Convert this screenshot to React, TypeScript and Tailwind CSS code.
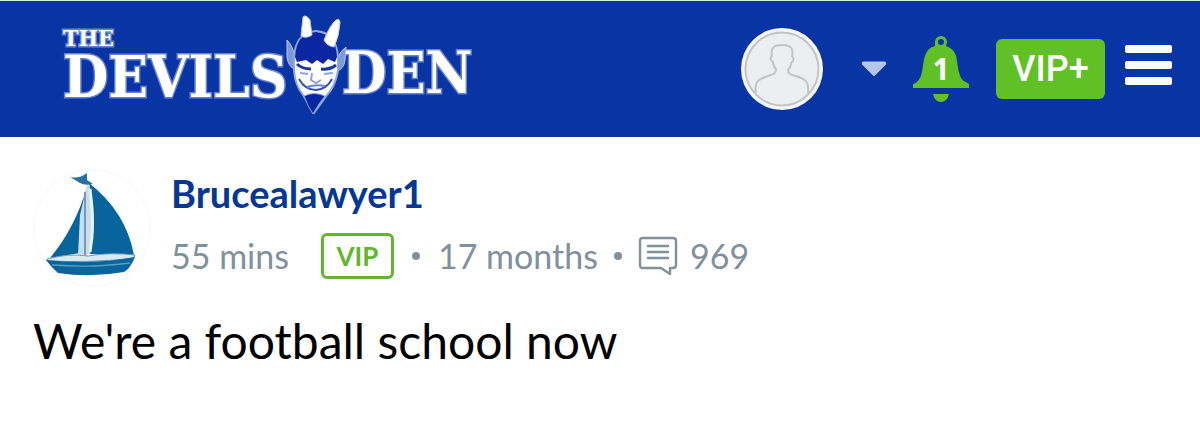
const post = {
  author: "Brucealawyer1",
  age: "55 mins",
  member: "17 months",
  posts: 969,
  body: "We're a football school now",
};

function Logo() {
  return (
    <svg viewBox="0 0 420 104" className="h-[104px] w-[420px]" role="img" aria-label="The Devils Den">
      <g
        fill="#fff"
        stroke="#6482d0"
        strokeWidth="3"
        paintOrder="stroke"
        fontWeight="700"
        fontFamily="'DejaVu Serif Condensed', 'DejaVu Serif', serif"
      >
        <text x="7" y="33" fontSize="23">THE</text>
        <text x="7" y="84" fontSize="58">DEVILS</text>
        <text x="286" y="80" fontSize="57">DEN</text>
      </g>

      {/* ears */}
      <path d="M231 27 Q237 33 239 44 L240 57 Q232 54 231 44Z M290 34 Q284 38 281 46 L281 58 Q288 56 289 47Z" fill="#7f98da" stroke="#b4c4ee" />
      {/* face */}
      <path
        d="M238 44 Q240 19 260 18 Q280 19 282 44 L282 58 Q279 74 271 82 L258 100 L247 82 Q239 72 238 58Z"
        fill="#fff"
        stroke="#8fa6e0"
        strokeWidth="2"
      />
      {/* hair */}
      <path d="M239 44 Q240 20 260 19 Q280 21 281 44 L279 49 L272 46 L267 51 L261 47 L256 51 L250 47 L241 49 Z" fill="#0a26a0" />
      {/* horns */}
      <path d="M245 23 L247 4 Q250 1 254 7 L256 22 Q250 26 245 23Z" fill="#fff" stroke="#b9c8f0" />
      <path d="M268 27 Q274 12 280 7 Q284 5 284 10 Q283 24 278 34 Q271 33 268 27Z" fill="#fff" stroke="#b9c8f0" />
      {/* brows, nose, mouth */}
      <path d="M241 51 Q246 56 255 56 M265 56 Q274 57 280 52" fill="none" stroke="#1a36a5" strokeWidth="3" />
      <path d="M244 60 L252 61 M268 61 L277 60" fill="none" stroke="#8fa3dc" strokeWidth="2" />
      <path d="M256 60 L255 67 L260 70 L265 67" fill="none" stroke="#8fa3dc" strokeWidth="2" />
      <path d="M243 66 Q249 77 260 77 Q271 76 276 66" fill="none" stroke="#3452b4" strokeWidth="2" />
      <path d="M251 74 Q260 71 269 73" fill="none" stroke="#6b84cc" strokeWidth="2" />
      {/* beard */}
      <path d="M248 83 Q258 78 269 83 L263 91 L257 101 Q252 94 248 83Z" fill="#0a26a0" stroke="#8ba3dc" />
    </svg>
  );
}

function UserAvatar() {
  return (
    <svg viewBox="0 0 82 82" className="size-[82px]" aria-hidden="true">
      <circle cx="41" cy="41" r="41" fill="#f4f6f9" />
      <circle cx="41" cy="41" r="36.5" fill="#eceef1" stroke="#c4c4c8" strokeWidth="2" />
      <path
        d="M15 65 C13 54 17 52 24 49 C31 46 35 47 35 41 C33 39 32 37 32 34 C29 33 29 29 31 28 C29 18 35 17 41 17 C49 17 53 20 51 28 C53 30 53 33 50 35 C50 38 49 40 47 42 C47 47 52 47 58 49 C65 52 68 54 67 65"
        fill="none"
        stroke="#c4c4c8"
        strokeWidth="2"
      />
    </svg>
  );
}

function Bell() {
  return (
    <svg viewBox="0 0 56 66" className="h-[66px] w-14" aria-hidden="true">
      <path
        fillRule="evenodd"
        d="M28 0 A6 6 0 0 1 34 6 L33 10 Q43 13 44 25 Q46 43 51 45 L56 48 V52 H0 V48 Q7 46 9 36 C11 27 10 13 22 10 L22 6 A6 6 0 0 1 28 0Z M28 3 A3 3 0 1 0 28 9 A3 3 0 1 0 28 3Z"
        fill="#62c027"
      />
      <path d="M20 58 H36 Q34 66 28 66 Q22 66 20 58Z" fill="#62c027" />
    </svg>
  );
}

function Sailboat() {
  return (
    <svg viewBox="0 0 116 116" className="size-[116px]" aria-hidden="true">
      <path d="M36 7 Q45 9 53 3 L53 10 L59 14 Q51 16 46 13 Z" fill="#28709e" />
      <path d="M53 17 Q41 58 16 88 L46 83 L49 35Z" fill="#08649d" />
      <path d="M53 15 L58 17 Q63 58 56 84 L44 85 L46 45Z" fill="#c5def0" />
      <path d="M51 22 V85" stroke="#7d98ad" strokeWidth="2" />
      <path d="M55 13 Q92 42 100 85 L56 84 Q64 50 55 13Z" fill="#08649d" />
      <path d="M56 19 Q61 55 56 82" stroke="#e8f5fb" strokeWidth="3" fill="none" />
      <path d="M13 89 Q35 83 54 86 Q76 82 101 85 L100 88 Q60 93 13 91Z" fill="#d8eaf3" stroke="#6b99b8" />
      <path d="M12 90 Q60 95 101 87 Q96 99 90 102 Q57 108 24 103 Q17 97 12 90Z" fill="#08649d" />
      <path d="M18 95 Q60 98 96 93" stroke="#5d9bc0" strokeWidth="1.5" fill="none" />
    </svg>
  );
}

function CommentIcon() {
  return (
    <svg viewBox="0 0 40 40" className="size-10" fill="none" stroke="#80909d" strokeWidth="2.4" strokeLinejoin="round" strokeLinecap="round" aria-hidden="true">
      <path d="M5 2 H35 Q38 2 38 5 V29 Q38 32 35 32 H32 V38 L23 32 H5 Q2 32 2 29 V5 Q2 2 5 2Z" />
      <path d="M10 10 H30 M10 16 H30 M10 22 H30" />
    </svg>
  );
}

export default function App() {
  return (
    <div className="min-h-screen bg-white font-['Lato',sans-serif]">
      <header className="flex h-[137px] items-center justify-between border-t border-[#d0ecf6] bg-[#0834a4] pr-7 pl-14">
        <a href="#home" className="pb-2">
          <Logo />
        </a>
        <nav className="flex items-center">
          <button className="flex items-center gap-[38px]" aria-label="Account menu">
            <UserAvatar />
            <svg viewBox="0 0 26 15" className="h-4 w-[26px]" aria-hidden="true">
              <path d="M2 0 H24 Q26 1 25 3 L14 14 Q13 15 12 14 L1 3 Q0 1 2 0Z" fill="#b6c5ea" />
            </svg>
          </button>
          <button className="relative ml-[26px]" aria-label="Notifications">
            <Bell />
            <span className="absolute inset-0 flex items-center justify-center font-['Open_Sans',sans-serif] text-3xl font-bold text-white">1</span>
          </button>
          <button className="ml-[27px] h-[60px] w-[109px] rounded-md bg-[#62c027] font-['Roboto',sans-serif] text-4xl font-medium text-white">
            VIP+
          </button>
          <button className="ml-5 flex flex-col gap-2 pb-2" aria-label="Menu">
            <span className="h-2 w-[47px] rounded-xs bg-white" />
            <span className="h-2 w-[47px] rounded-xs bg-white" />
            <span className="h-2 w-[47px] rounded-xs bg-white" />
          </button>
        </nav>
      </header>

      <article className="px-[33px] pt-8">
        <div className="flex gap-5">
          <div className="size-[118px] shrink-0 overflow-hidden rounded-full border border-[#f3f6f7]">
            <Sailboat />
          </div>
          <div>
            <a href="#author" className="block text-[38px] leading-[48px] font-bold text-[#053794]">
              {post.author}
            </a>
            <div className="mt-4 flex items-center text-[34px] leading-[46px] text-[#80909d]">
              <span>{post.age}</span>
              <span className="ml-8 flex h-[46px] w-[73px] items-center justify-center rounded-md border-3 border-[#62b62f] text-[26px] font-bold text-[#62b62f]">
                VIP
              </span>
              <span className="mx-[18px] size-2 rounded-full bg-[#80909d]" />
              <span>{post.member}</span>
              <span className="mx-4 size-2 rounded-full bg-[#80909d]" />
              <CommentIcon />
              <span className="ml-3">{post.posts}</span>
            </div>
          </div>
        </div>
        <p className="mt-6 text-5xl leading-[60px] text-black">{post.body}</p>
      </article>
    </div>
  );
}
